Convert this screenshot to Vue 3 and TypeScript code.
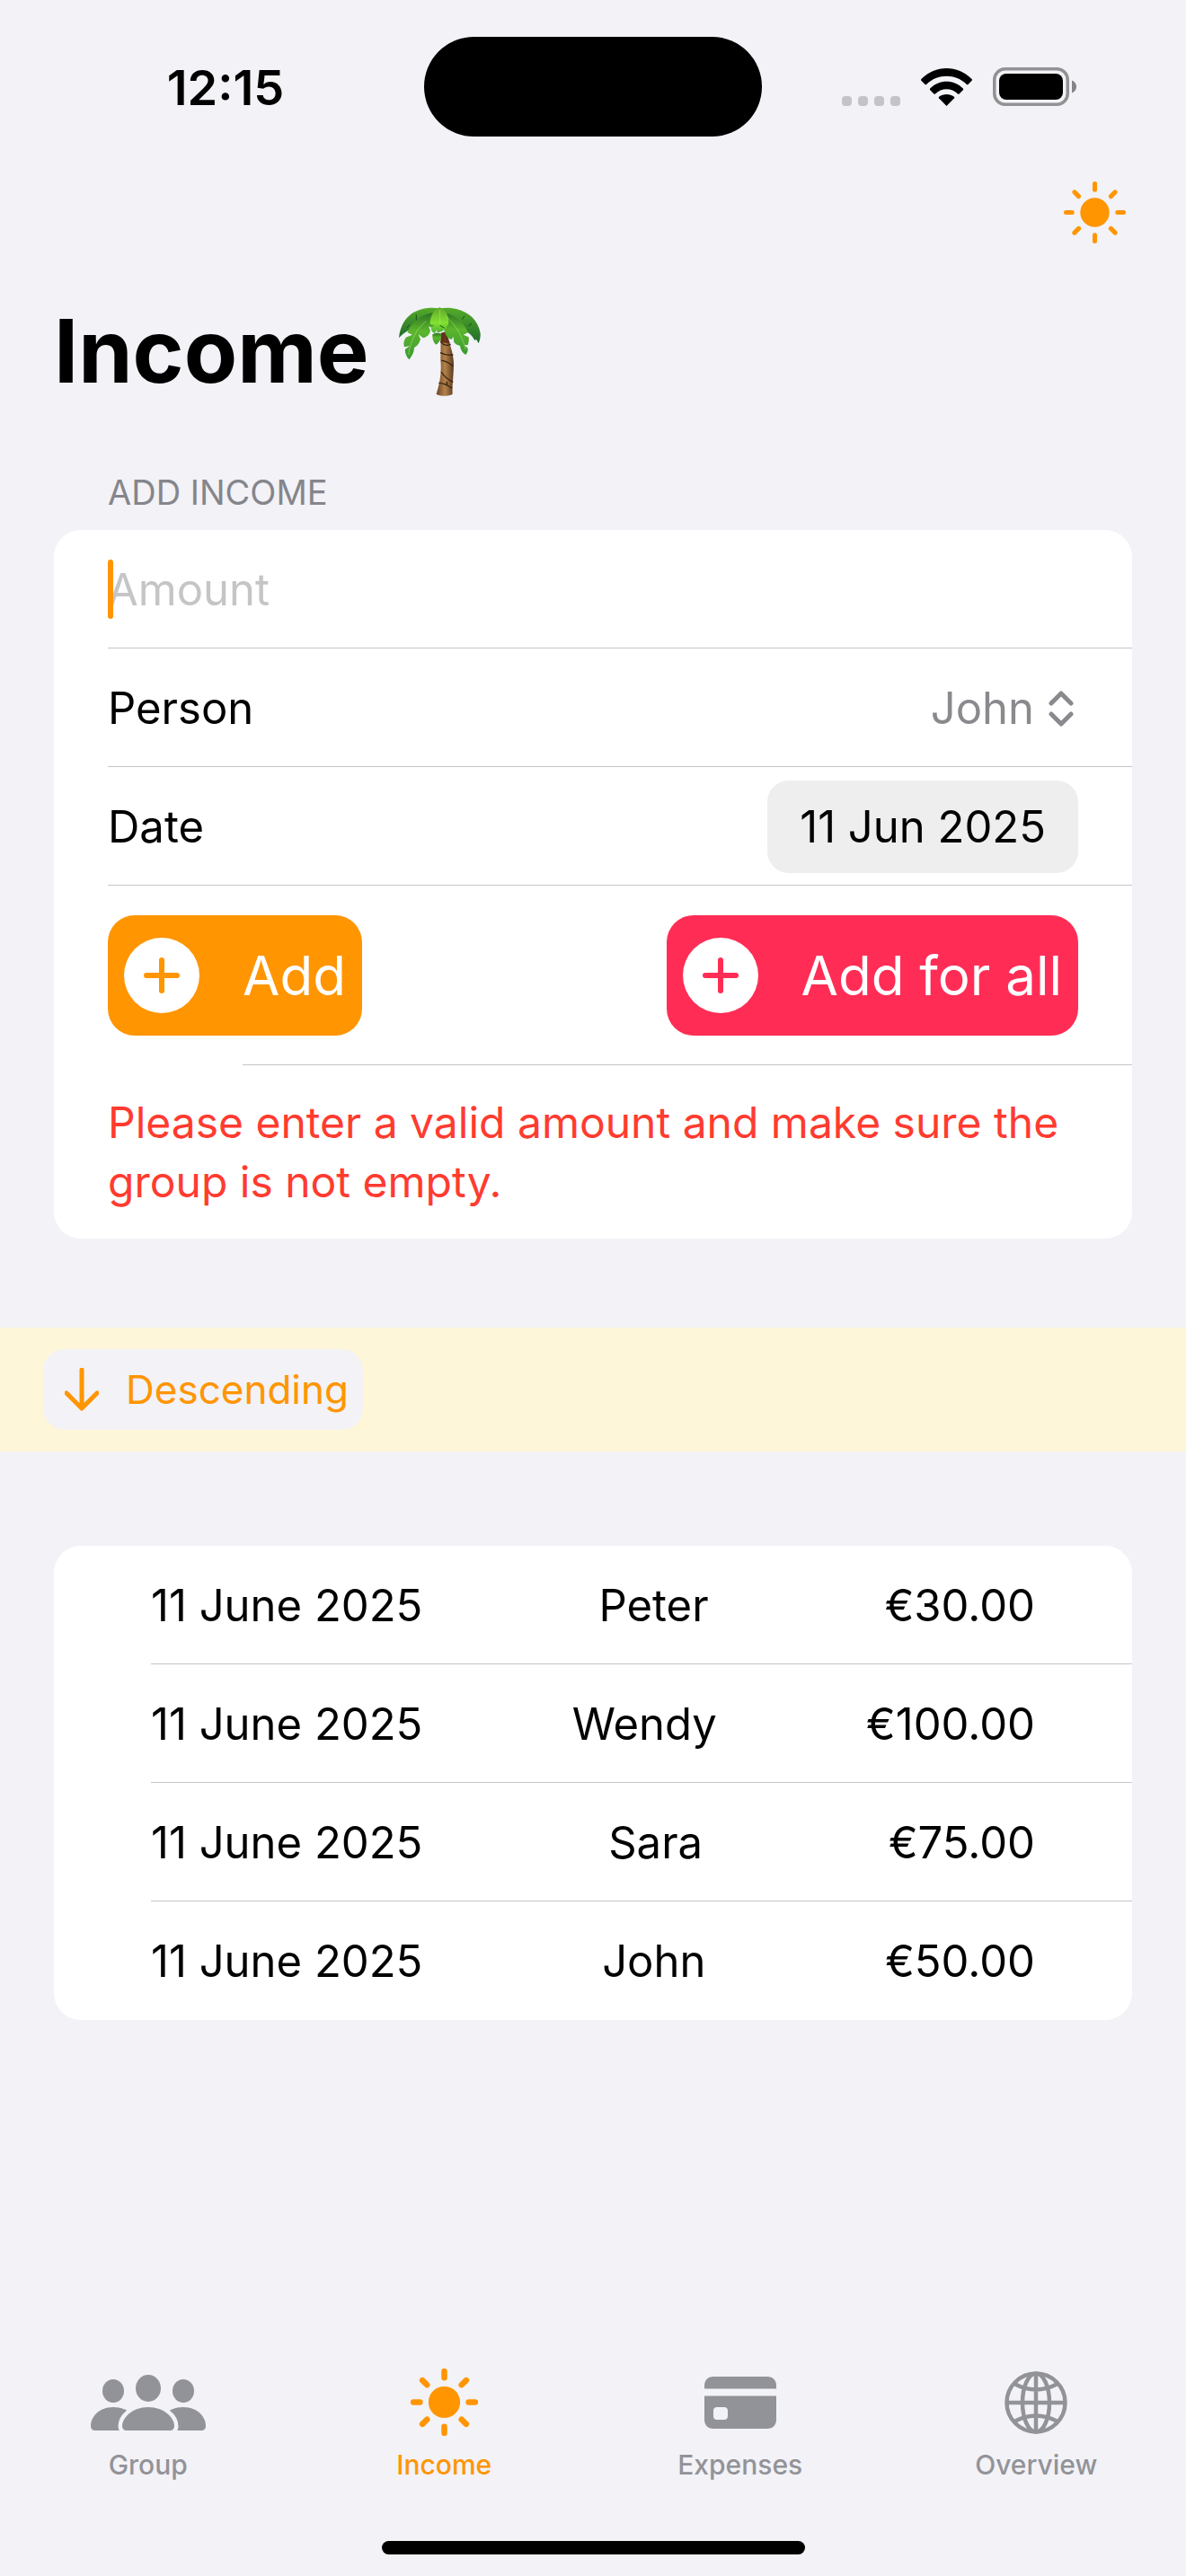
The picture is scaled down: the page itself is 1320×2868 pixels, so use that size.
<script setup lang="ts">
import { ref } from 'vue'

interface Entry {
  date: string
  person: string
  amount: string
}

interface Tab {
  id: string
  label: string
}

const people: string[] = ['John', 'Sara', 'Wendy', 'Peter']
const person = ref<string>('John')
const amount = ref<string>('')
const activeTab = ref<string>('income')

const entries: Entry[] = [
  { date: '11 June 2025', person: 'Peter', amount: '€30.00' },
  { date: '11 June 2025', person: 'Wendy', amount: '€100.00' },
  { date: '11 June 2025', person: 'Sara', amount: '€75.00' },
  { date: '11 June 2025', person: 'John', amount: '€50.00' },
]

const tabs: Tab[] = [
  { id: 'group', label: 'Group' },
  { id: 'income', label: 'Income' },
  { id: 'expenses', label: 'Expenses' },
  { id: 'overview', label: 'Overview' },
]

const rays: number[] = [0, 45, 90, 135, 180, 225, 270, 315]
</script>

<template>
  <div class="screen">
    <header class="status">
      <span class="time">12:15</span>
      <span class="island"></span>
      <div class="indicators">
        <span class="dots"><i></i><i></i><i></i><i></i></span>
        <svg class="wifi" viewBox="0 0 57 42" aria-hidden="true">
          <path d="M28.500 42 L19.900 33.300 C19.500 32.800 19.600 32.200 20.100 31.800 C25 28 32 28 36.900 31.800 C37.400 32.200 37.500 32.800 37.100 33.300 Z" />
          <path d="M10.200 24.200 C9.700 23.700 9.700 23 10.200 22.500 C20.500 12.200 36.500 12.200 46.800 22.500 C47.300 23 47.300 23.700 46.800 24.200 L42.600 28.400 C42.100 28.900 41.500 28.800 41 28.400 C34 21.500 23 21.500 16 28.400 C15.500 28.800 14.900 28.900 14.400 28.400 Z" />
          <path d="M.4 13.800 C-.1 13.300 -.1 12.600 .4 12.100 C16.100 -4 40.900 -4 56.600 12.100 C57.100 12.600 57.100 13.300 56.600 13.800 L52.500 17.900 C52 18.400 51.400 18.400 50.900 17.900 C38.400 5.700 18.600 5.700 6.100 17.900 C5.600 18.400 5 18.400 4.500 17.900 Z" />
        </svg>
        <svg class="battery" viewBox="0 0 93 43" aria-hidden="true">
          <rect x="1.750" y="1.750" width="81.500" height="39.500" rx="12" fill="none" stroke="#929295" stroke-width="3.500" />
          <rect x="7" y="7" width="71" height="29" rx="8" fill="#000" />
          <path d="M88 14.500 C91.500 16 93 18.500 93 21.500 C93 24.500 91.500 27 88 28.500 Z" fill="#858588" />
        </svg>
      </div>
    </header>

    <nav class="toolbar">
      <button type="button" class="bare" aria-label="Appearance">
        <svg class="sun-top" viewBox="-34.500 -34.500 69 69" aria-hidden="true">
          <circle r="16.200" fill="#ff9500" />
          <path v-for="r in rays" :key="r" d="M0 -25.300 V-32" :transform="`rotate(${r})`" class="ray" />
        </svg>
      </button>
    </nav>

    <h1 class="title">
      Income
      <svg class="palm" viewBox="69 63 273 297" role="img" aria-label="palm tree">
        <defs>
          <linearGradient id="trunk" x1="0" x2="1" y1="0" y2="0">
            <stop offset="0" stop-color="#6b4526" />
            <stop offset=".5" stop-color="#b3824a" />
            <stop offset="1" stop-color="#5c3a1f" />
          </linearGradient>
          <linearGradient id="leaf-dark" x1="0" x2="0" y1="0" y2="1">
            <stop offset="0" stop-color="#55ab29" />
            <stop offset="1" stop-color="#1f6b2c" />
          </linearGradient>
          <linearGradient id="leaf-mid" x1="0" x2="0" y1="0" y2="1">
            <stop offset="0" stop-color="#2c7423" />
            <stop offset=".4" stop-color="#5cb52d" />
            <stop offset="1" stop-color="#3a9a33" />
          </linearGradient>
          <linearGradient id="leaf-light" x1="0" x2="0" y1="0" y2="1">
            <stop offset="0" stop-color="#5fa82c" />
            <stop offset=".6" stop-color="#83e02f" />
            <stop offset="1" stop-color="#48b035" />
          </linearGradient>
        </defs>
        <path d="M209 150 L226 144 C236 180 250 210 252 250 C252 290 246 325 248 353 C236 361 205 361 194 353 C206 315 212 280 208 240 Z" fill="url(#trunk)" />
        <path d="M209 150 L226 144 L240 185 L208 180 Z" fill="#4b1f0d" opacity=".75" />
        <path d="M208 178 Q222 196 242 187 M207 215 Q228 226 250 222 M211 241 Q228 242 250 260 M210 279 Q225 302 250 313 M202 316 Q222 316 246 334 M229 312 V322" fill="none" stroke="#382113" stroke-width="4" />
        <path d="M205 67 C150 60 80 75 69 165 C90 143 118 130 150 120 C175 112 195 105 209 88 Z" fill="url(#leaf-dark)" />
        <path d="M205 67 C265 58 330 85 341 150 C342 165 338 176 335 184 L327 170 L322 174 C312 150 285 138 262 125 C240 112 222 100 209 88 Z" fill="url(#leaf-dark)" />
        <path d="M195 80 C150 80 108 115 98 148 L114 155 L92 164 C84 176 84 186 87 196 L105 193 L90 203 C88 217 96 230 103 238 C114 224 120 212 120 198 C130 192 137 184 141 170 L134 154 L150 166 C163 163 172 154 174 142 L168 126 L182 134 C192 120 198 108 204 90 Z" fill="url(#leaf-mid)" />
        <path d="M211 80 C255 85 285 112 300 148 L284 155 L302 163 C304 176 300 185 299 190 L287 189 L299 200 C300 212 296 218 292 222 C281 216 274 205 273 192 C263 190 256 186 252 178 L251 162 L244 171 C232 168 225 157 222 144 C214 125 206 105 206 88 Z" fill="url(#leaf-mid)" />
        <path d="M205 64 C184 70 172 98 173 120 L190 125 L176 129 C176 143 182 148 189 150 L195 139 L197 148 C212 147 228 138 235 115 C236 92 224 70 205 64 Z" fill="url(#leaf-light)" />
        <path d="M181 154 C180 170 185 182 193 188 C204 181 211 170 211 154 C201 147 190 149 181 154 Z" fill="url(#leaf-mid)" />
        <path d="M206 72 V122 M160 110 C135 130 110 160 101 222 M228 95 C255 120 280 155 292 205" fill="none" stroke="#b6e86c" stroke-width="2" opacity=".8" />
        <path d="M127 88 V106 M103 122 L96 132 M288 92 L280 104 M312 118 L300 126 M206 124 L220 132" stroke="#1d4d1b" stroke-width="3" />
      </svg>
    </h1>

    <main>
      <h2 class="section">ADD INCOME</h2>
      <form class="card" @submit.prevent>
        <div class="row field">
          <span class="caret"></span>
          <input v-model="amount" class="amount" type="text" inputmode="decimal" placeholder="Amount" aria-label="Amount" />
        </div>
        <div class="row">
          <label for="person">Person</label>
          <span class="picker">
            <select id="person" v-model="person">
              <option v-for="p in people" :key="p" :value="p">{{ p }}</option>
            </select>
            <svg class="chevrons" viewBox="0 0 32 40" aria-hidden="true">
              <path d="M5 14 L16 3 L27 14 M5 26 L16 37 L27 26" />
            </svg>
          </span>
        </div>
        <div class="row">
          <label for="date">Date</label>
          <button id="date" type="button" class="date">11 Jun 2025</button>
        </div>
        <div class="actions">
          <button type="submit" class="add add-one">
            <svg viewBox="0 0 84 84" aria-hidden="true">
              <circle cx="42" cy="42" r="42" />
              <path d="M42 25 V59 M25 42 H59" />
            </svg>
            <span>Add</span>
          </button>
          <button type="button" class="add add-all">
            <svg viewBox="0 0 84 84" aria-hidden="true">
              <circle cx="42" cy="42" r="42" />
              <path d="M42 25 V59 M25 42 H59" />
            </svg>
            <span>Add for all</span>
          </button>
        </div>
        <p class="error">Please enter a valid amount and make sure the group is not empty.</p>
      </form>

      <div class="band">
        <button type="button" class="sort">
          <svg viewBox="0 0 38 48" aria-hidden="true">
            <path d="M19 2 V44 M2 28 L19 45 L36 28" />
          </svg>
          <span>Descending</span>
        </button>
      </div>

      <table class="card list">
        <tbody>
          <tr v-for="e in entries" :key="e.person">
            <td>{{ e.date }}</td>
            <td>{{ e.person }}</td>
            <td>{{ e.amount }}</td>
          </tr>
        </tbody>
      </table>
    </main>

    <nav class="tabs">
      <button
        v-for="t in tabs"
        :key="t.id"
        type="button"
        class="tab"
        :class="{ active: t.id === activeTab }"
        @click="activeTab = t.id"
      >
        <span class="tab-icon">
          <svg v-if="t.id === 'group'" width="128" height="62" viewBox="0 0 128 62" aria-hidden="true">
            <ellipse cx="25" cy="18" rx="12" ry="13" />
            <ellipse cx="103" cy="18" rx="12" ry="13" />
            <path d="M5 62 C2 62 0 60 0 57 C0 47 9 36 25 36 C42 36 51 47 51 57 V62 Z" />
            <path d="M123 62 C126 62 128 60 128 57 C128 47 119 36 103 36 C86 36 77 47 77 57 V62 Z" />
            <path class="front" d="M40 62 C37 62 35 60 35 57 C35 48 46 36 64 36 C82 36 93 48 93 57 C93 60 91 62 88 62 Z" />
            <ellipse cx="64" cy="15" rx="14" ry="15" />
          </svg>
          <svg v-else-if="t.id === 'income'" width="75" height="75" viewBox="-34.500 -34.500 69 69" aria-hidden="true">
            <circle r="16.200" />
            <path v-for="r in rays" :key="r" d="M0 -25 V-31.700" :transform="`rotate(${r})`" class="ray thick" />
          </svg>
          <svg v-else-if="t.id === 'expenses'" width="80" height="58" viewBox="0 0 80 58" aria-hidden="true">
            <path d="M0 13.500 V10 C0 4 4 0 10 0 H70 C76 0 80 4 80 10 V13.500 Z" />
            <path fill-rule="evenodd" d="M0 21.500 H80 V48 C80 54 76 58 70 58 H10 C4 58 0 54 0 48 Z M14 34 C11.500 34 10 35.500 10 38 V44 C10 46.500 11.500 48 14 48 H22 C24.500 48 26 46.500 26 44 V38 C26 35.500 24.500 34 22 34 Z" />
          </svg>
          <svg v-else width="70" height="70" viewBox="-35 -35 70 70" class="globe" aria-hidden="true">
            <circle r="32.500" />
            <ellipse rx="15" ry="32.500" />
            <path d="M0 -32 V32 M-32 0 H32 M-24 -21 Q0 -8 24 -21 M-24 21 Q0 8 24 21" />
          </svg>
        </span>
        <span>{{ t.label }}</span>
      </button>
    </nav>
    <div class="home"></div>
  </div>
</template>

<style>
body {
  margin: 0;
  background: #f2f2f7;
}
</style>

<style scoped>
.screen {
  display: flex;
  flex-direction: column;
  min-height: 100vh;
  background: #f2f2f7;
  color: #000;
  font-family: Inter, "Liberation Sans", sans-serif;
  font-size: 49px;
  line-height: 66px;
}

button,
input,
select {
  margin: 0;
  padding: 0;
  border: 0;
  border-radius: 0;
  outline: 0;
  background: none;
  color: inherit;
  font: inherit;
  appearance: none;
}

svg {
  display: block;
  flex: none;
}

.status {
  display: grid;
  grid-template-columns: 1fr 376px 1fr;
  align-items: center;
  padding-top: 41px;
}

.time {
  padding: 2px 0 0 30px;
  text-align: center;
  font-size: 54px;
  font-weight: 600;
}

.island {
  height: 111px;
  border-radius: 56px;
  background: #000;
}

.indicators {
  display: flex;
  align-items: flex-end;
  justify-content: flex-end;
  gap: 23px;
  padding-right: 122px;
}

.dots {
  display: flex;
  gap: 7px;
}

.dots i {
  width: 11px;
  height: 11px;
  border-radius: 4px;
  background: #c3c3c8;
}

.wifi {
  width: 57px;
  height: 42px;
}

.battery {
  width: 93px;
  height: 43px;
}

.toolbar {
  display: flex;
  justify-content: flex-end;
  padding: 50px 67px 0;
}

.bare {
  line-height: 0;
}

.sun-top {
  width: 69px;
  height: 69px;
}

.ray {
  fill: none;
  stroke: #ff9500;
  stroke-width: 5;
  stroke-linecap: round;
}

.thick {
  stroke-width: 6;
}

.title {
  display: flex;
  align-items: center;
  gap: 33px;
  margin: 0;
  padding: 60px 60px 0;
  font-size: 97px;
  font-weight: 700;
  line-height: 120px;
}

.palm {
  width: 91px;
  height: 99px;
}

.section {
  margin: 0;
  padding: 73px 120px 18px;
  color: #85858b;
  font-size: 38px;
  font-weight: 400;
  line-height: 48px;
}

.card {
  margin: 0 60px;
  border-radius: 30px;
  background: #fff;
}

.row,
.actions {
  display: flex;
  align-items: center;
  justify-content: space-between;
  box-sizing: border-box;
  margin-left: 60px;
  padding-right: 60px;
  border-bottom: 1px solid #c6c6c8;
}

.row {
  height: 132px;
  padding-top: 2px;
}

.field {
  position: relative;
}

.caret {
  position: absolute;
  top: 33px;
  left: 0;
  width: 6px;
  height: 66px;
  border-radius: 3px;
  background: #ff9500;
}

.amount {
  width: 100%;
  height: 66px;
}

.amount::placeholder {
  color: #c5c5c7;
  opacity: 1;
}

.picker {
  display: flex;
  align-items: center;
  gap: 14px;
  color: #8a8a8e;
}

.picker select {
  height: 66px;
  text-align: right;
  text-align-last: right;
}

.chevrons {
  width: 32px;
  height: 40px;
  margin-right: 3px;
  fill: none;
  stroke: #8a8a8e;
  stroke-width: 5;
  stroke-linecap: round;
  stroke-linejoin: round;
}

.date {
  height: 103px;
  padding: 0 36px;
  border-radius: 24px;
  background: #eeeeef;
}

.actions {
  position: relative;
  height: 200px;
  border-bottom: 0;
}

.actions::after {
  content: "";
  position: absolute;
  right: 0;
  bottom: 0;
  left: 150px;
  height: 1px;
  background: #c6c6c8;
}

.add {
  display: flex;
  align-items: center;
  gap: 48px;
  height: 134px;
  padding: 0 18px;
  border-radius: 30px;
  color: #fff;
  font-size: 60px;
}

.add svg {
  width: 84px;
  height: 84px;
  fill: #fff;
  stroke-width: 6;
  stroke-linecap: round;
}

.add-one {
  background: #ff9500;
}

.add-one path {
  stroke: #ff9500;
}

.add-all {
  background: #ff2d55;
}

.add-all path {
  stroke: #ff2d55;
}

.error {
  margin: 0;
  padding: 31px 60px 30px;
  color: #ff3b30;
  font-size: 48px;
}

.band {
  display: flex;
  margin-top: 99px;
  padding: 24px 48px;
  background: #fef6d9;
}

.sort {
  display: flex;
  align-items: center;
  gap: 30px;
  height: 90px;
  padding: 0 16px 0 24px;
  border-radius: 24px;
  background: #f2f2f7;
  color: #ff9500;
  font-size: 44px;
}

.sort svg {
  width: 38px;
  height: 48px;
  fill: none;
  stroke: #ff9500;
  stroke-width: 5;
  stroke-linecap: round;
  stroke-linejoin: round;
}

.list {
  display: block;
  margin-top: 105px;
}

.list tbody {
  display: block;
}

.list tr {
  display: flex;
  align-items: center;
  justify-content: space-between;
  box-sizing: border-box;
  height: 132px;
  margin-left: 108px;
  padding: 2px 108px 0 0;
  border-bottom: 1px solid #c6c6c8;
}

.list tr:last-child {
  border-bottom: 0;
}

.list td {
  padding: 0;
}

.tabs {
  display: grid;
  grid-template-columns: repeat(4, 1fr);
  margin-top: auto;
  padding-right: 2px;
}

.tab {
  display: flex;
  flex-direction: column;
  align-items: center;
  gap: 12px;
  color: #929398;
  fill: #929398;
  font-size: 30px;
  font-weight: 500;
  line-height: 40px;
}

.tab.active {
  color: #ff9500;
  fill: #ff9500;
}

.tab-icon {
  display: flex;
  align-items: center;
  justify-content: center;
  height: 75px;
}

.front {
  stroke: #f2f2f7;
  stroke-width: 9;
  paint-order: stroke;
}

.globe {
  fill: none;
  stroke: #929398;
  stroke-width: 4.500;
}

.home {
  align-self: center;
  width: 471px;
  height: 15px;
  margin: 65px 0 24px;
  border-radius: 8px;
  background: #000;
}
</style>
